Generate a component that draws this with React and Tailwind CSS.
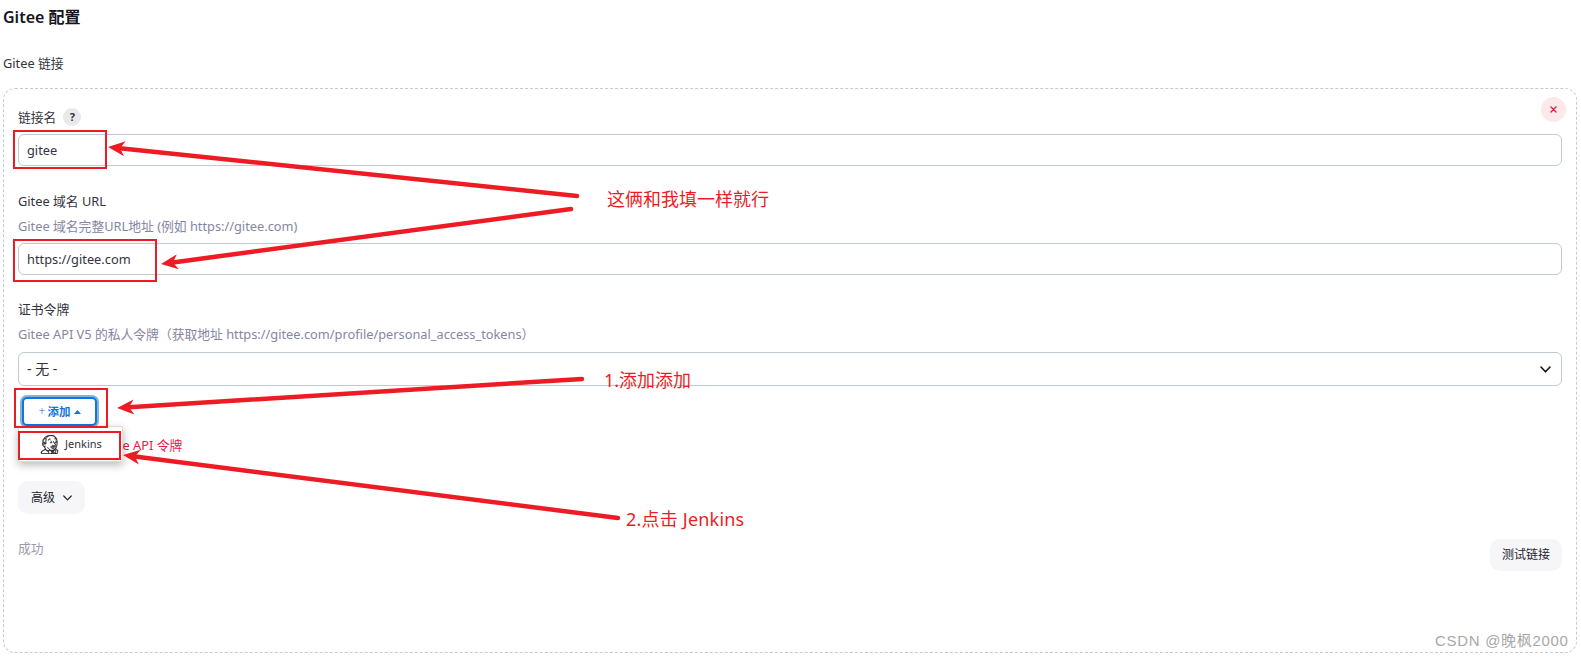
import React from "react";
import { SiJenkins } from "react-icons/si";

const RED = "#ed1c24";

function Arrow({ from, to }) {
  const [x1, y1] = from;
  const [x2, y2] = to;
  const len = Math.hypot(x2 - x1, y2 - y1);
  const ux = (x2 - x1) / len;
  const uy = (y2 - y1) / len;
  const nx = -uy;
  const ny = ux;
  const L = 17;
  const W = 7.5;
  const N = 12;
  const p = (a, b) => `${x2 - ux * a + nx * b},${y2 - uy * a + ny * b}`;
  return (
    <g>
      <line x1={x1} y1={y1} x2={x2 - ux * N} y2={y2 - uy * N} stroke={RED} strokeWidth="4.5" strokeLinecap="round" />
      <polygon points={`${x2},${y2} ${p(L, W)} ${p(N, 0)} ${p(L, -W)}`} fill={RED} />
    </g>
  );
}

function Mark({ className }) {
  return <div className={`absolute border-2 border-[#ed1c24] ${className}`} />;
}

const inputCls =
  "block h-8 w-full rounded-md border border-[#c0cad0] bg-white px-2 text-[12.8px] text-[#33333d] outline-none";
const labelCls = "h-[18px] text-[12.8px] leading-[18px] text-[#33333d]";
const descCls = "h-[18px] text-[12.8px] leading-[18px] text-[#8686a0]";

export default function App() {
  return (
    <div className="relative h-[658px] w-[1581px] overflow-hidden bg-white px-[3px] font-['Noto_Sans','Noto_Sans_CJK_SC',sans-serif] text-[#23232d]">
      <h3 className="mt-[5px] h-6 text-base font-semibold leading-6 text-[#14141f]">Gitee 配置</h3>
      <div className={`mt-[25px] ${labelCls}`}>Gitee 链接</div>

      <div className="mt-[16px] flex h-[565px] w-[1574px] flex-col rounded-xl border border-dashed border-[#c4cbd0] px-[14px] pt-[19px]">
        <div className="flex flex-col gap-2">
          <div className={`flex items-center gap-[7px] ${labelCls}`}>
            <span>链接名</span>
            <span className="flex h-[18px] w-[18px] items-center justify-center rounded-full bg-[#e9e9ec] text-[11px] font-bold text-[#33333d]">?</span>
          </div>
          <input className={inputCls} readOnly value="gitee" />
        </div>

        <div className="mt-[26px] flex flex-col">
          <div className={labelCls}>Gitee 域名 URL</div>
          <div className={`mt-[7px] ${descCls}`}>Gitee 域名完整URL地址 (例如 https://gitee.com)</div>
          <input className={`${inputCls} mt-2`} readOnly value="https://gitee.com" />
        </div>

        <div className="mt-[25px] flex flex-col">
          <div className={labelCls}>证书令牌</div>
          <div className={`mt-[7px] ${descCls}`}>Gitee API V5 的私人令牌（获取地址 https://gitee.com/profile/personal_access_tokens）</div>
          <div className="mt-[9px] flex h-[34px] items-center justify-between rounded-md border border-[#c0cad0] bg-white pl-2 pr-[10px] text-sm text-[#33333d]">
            <span>- 无 -</span>
            <svg width="11" height="7" viewBox="0 0 11 7" fill="none" stroke="#14141f" strokeWidth="1.6" strokeLinecap="round" strokeLinejoin="round">
              <path d="M1 1 L5.5 5.8 L10 1" />
            </svg>
          </div>
        </div>

        <button className="mt-[11px] ml-[4px] flex h-[29px] w-[75px] items-center justify-center gap-[2px] rounded-[5px] border-2 border-[#1274e0] bg-white pl-[1px] text-[11.5px] font-semibold text-[#1274e0] shadow-[0_0_0_2px_#86b4d8]">
          <span className="text-xs font-light leading-none">+</span>
          <span>添加</span>
          <svg width="7" height="4" viewBox="0 0 7 4" className="ml-[2px]"><path d="M0 4 L3.5 0 L7 4 Z" fill="#1274e0" /></svg>
        </button>

        <div className="mt-[10px] h-[18px] text-[12.8px] leading-[18px] text-[#e6194b]">请选择有效的 Gitee API 令牌</div>

        <button className="mt-[27px] flex h-[33px] w-[67px] items-center justify-center gap-[8px] rounded-[10px] bg-[#f6f6f8] text-xs text-[#23232d]">
          <span>高级</span>
          <svg width="9" height="6" viewBox="0 0 9 6" fill="none" stroke="#23232d" strokeWidth="1.2" strokeLinecap="round" strokeLinejoin="round">
            <path d="M0.8 1 L4.5 4.8 L8.2 1" />
          </svg>
        </button>

        <div className="mt-[25px] flex items-start justify-between">
          <span className="h-[18px] text-[12.8px] leading-[18px] text-[#9a9aae]">成功</span>
          <button className="h-8 w-[72px] rounded-[10px] bg-[#f6f6f8] text-xs text-[#23232d]">测试链接</button>
        </div>
      </div>

      {/* close button */}
      <div className="absolute left-[1541px] top-[97px] flex h-[25px] w-[25px] items-center justify-center rounded-full bg-[#fde8ea]">
        <svg width="7" height="7" viewBox="0 0 7 7" stroke="#e6194b" strokeWidth="1.4" strokeLinecap="round">
          <path d="M1 1 L6 6 M6 1 L1 6" />
        </svg>
      </div>

      {/* open dropdown */}
      <div className="absolute left-[18px] top-[426px] flex h-[36px] w-[105px] items-center gap-[6px] border border-[#dcdcdc] bg-white pl-[21px] text-[11px] text-[#33333d] shadow-[0_3px_8px_rgba(0,0,0,0.28)]">
        <SiJenkins size={19} color="#1d1d1d" stroke="#1d1d1d" strokeWidth={0.5} />
        <span>Jenkins</span>
      </div>

      {/* annotations */}
      <Mark className="left-[13px] top-[130px] h-[39px] w-[94px]" />
      <Mark className="left-[13px] top-[239px] h-[43px] w-[144px]" />
      <Mark className="left-[14px] top-[388px] h-[40px] w-[94px]" />
      <Mark className="left-[18px] top-[431px] h-[29px] w-[103px]" />

      <svg className="absolute left-0 top-0" width="1581" height="658" viewBox="0 0 1581 658">
        <Arrow from={[577, 196]} to={[108, 147]} />
        <Arrow from={[571, 209]} to={[161, 264]} />
        <Arrow from={[582, 379]} to={[117, 408]} />
        <Arrow from={[618, 518]} to={[123, 455]} />
      </svg>

      <div className="absolute left-[607px] top-[187px] text-lg leading-6 text-[#ed1c24]">这俩和我填一样就行</div>
      <div className="absolute left-[604px] top-[368px] text-lg leading-6 text-[#ed1c24]">1.添加添加</div>
      <div className="absolute left-[626px] top-[507px] text-lg leading-6 tracking-[0.2px] text-[#ed1c24]">2.点击 Jenkins</div>

      <div className="absolute left-[1435px] top-[631px] font-['Liberation_Sans','Noto_Sans_CJK_SC',sans-serif] text-[15px] leading-5 tracking-[0.7px] text-[#a8a8a8]">CSDN @晚枫2000</div>
    </div>
  );
}
